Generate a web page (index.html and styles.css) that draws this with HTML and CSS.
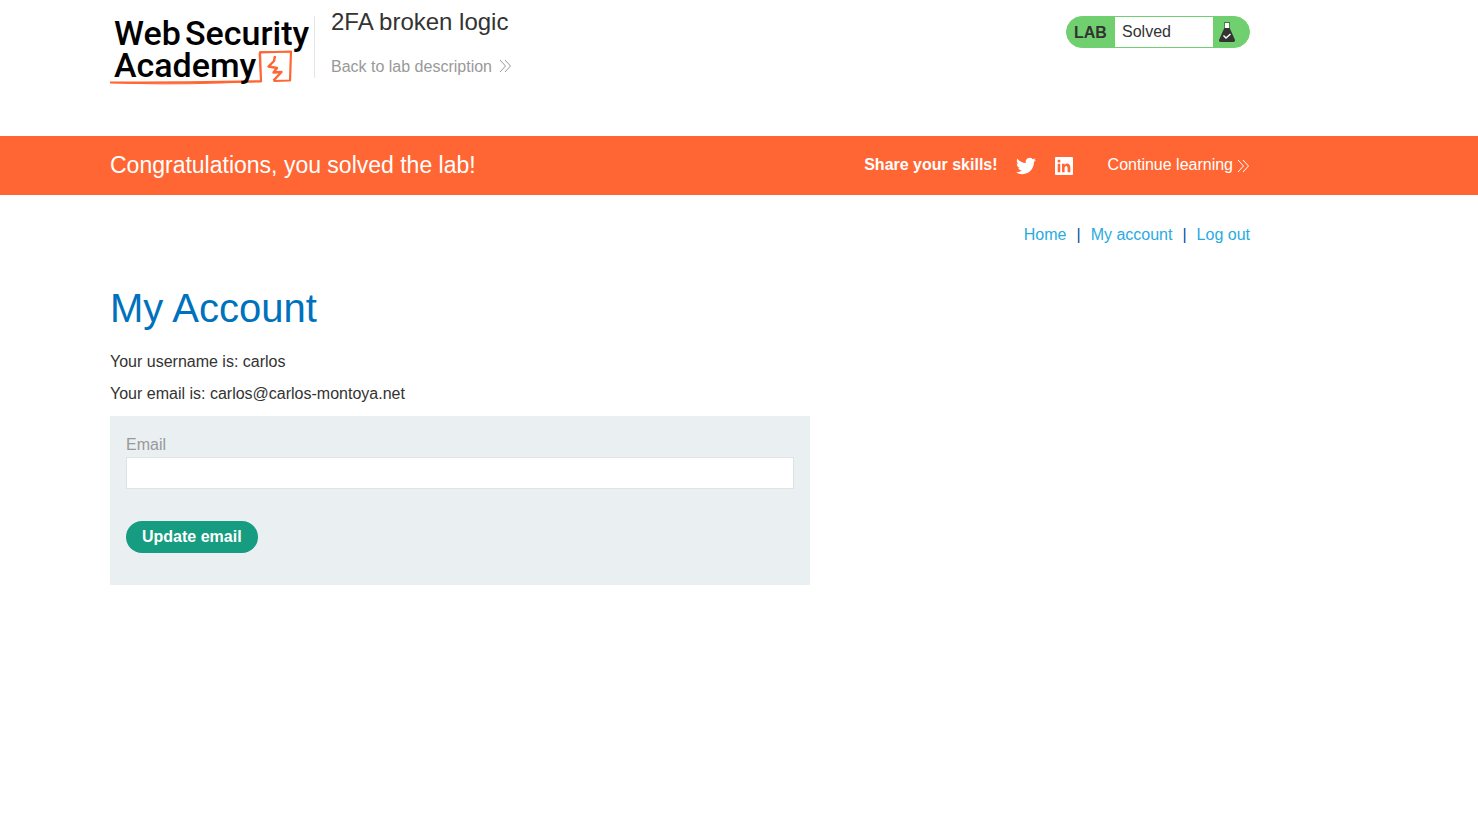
FILE: index.html
```html
<!DOCTYPE html>
<html lang="en">
<head>
<meta charset="utf-8">
<title>2FA broken logic</title>
<link rel="stylesheet" href="styles.css">
</head>
<body>
<header class="lab-header container">
  <a class="logo" href="#" aria-label="Web Security Academy">
    <svg width="201" height="80" viewBox="0 0 201 80">
      <g class="logo-mark">
        <path d="M0 74.500 Q60 74.800 151 73.300 L150 44.500 L181 43.500 L180 72.500 L163.500 73" stroke-width="2.200"/>
        <path d="M1 74.500 Q50 77 110 75 L150 73.500"/>
        <path d="M149 45.500 L151 74 M149.500 43.500 L182 44"/>
        <path d="M165 48 L164 53 L158.500 58.500 L167 60 L163.500 64.500 L171.500 64 L163.500 72.500" stroke-width="2.400"/>
      </g>
      <g class="logo-text">
        <text x="4" y="37">Web</text>
        <text x="75" y="37">Security</text>
        <text x="4" y="69">Academy</text>
      </g>
    </svg>
  </a>
  <div class="title-block">
    <h2 class="lab-title">2FA broken logic</h2>
    <a class="back-link" href="#">Back to lab description
      <svg class="chevrons" width="13" height="14" viewBox="0 0 13 14"><path d="M1 1 L6.500 7 L1 13 M6 1 L11.500 7 L6 13"/></svg>
    </a>
  </div>
  <div class="lab-status">
    <span class="lab-tag">LAB</span>
    <span class="lab-state">Solved</span>
    <span class="lab-flask">
      <svg width="16" height="20" viewBox="0 0 16 20">
        <path d="M6 1 H10 V6 H6 Z" fill="#fff"/>
        <path d="M5 .5 H11" stroke="#333332" stroke-width="1" stroke-opacity=".6" fill="none"/>
        <path d="M5.500 1 V6 M10.500 1 V6" stroke="#333332" stroke-opacity=".5" fill="none"/>
        <path d="M5.300 6 H10.700 L15.800 17.500 Q16.500 20 14 20 H2 Q-.5 20 .2 17.500 Z" fill="#333332"/>
        <path d="M4.500 13.500 L7 16 L11.500 12" stroke="#fff" stroke-width="1.400" fill="none"/>
      </svg>
    </span>
  </div>
</header>

<section class="banner">
  <div class="banner-inner container">
    <h4 class="banner-title">Congratulations, you solved the lab!</h4>
    <div class="share">
      <span class="share-label">Share your skills!</span>
      <a class="share-icon" href="#" aria-label="Twitter">
        <svg width="20" height="20" viewBox="0 0 24 24"><path fill="#fff" d="M23.950 4.570a10 10 0 0 1-2.820.770 4.960 4.960 0 0 0 2.160-2.720c-.950.550-2 .950-3.130 1.180a4.920 4.920 0 0 0-8.380 4.480C7.690 8.100 4.070 6.130 1.640 3.160a4.820 4.820 0 0 0-.670 2.480c0 1.710.870 3.210 2.190 4.100a4.900 4.900 0 0 1-2.230-.620v.060a4.920 4.920 0 0 0 3.950 4.830 5 5 0 0 1-2.210.080 4.940 4.940 0 0 0 4.600 3.420A9.870 9.870 0 0 1 0 19.540a13.990 13.990 0 0 0 7.550 2.210c9.050 0 14-7.500 14-13.980 0-.210 0-.420-.020-.630a9.940 9.940 0 0 0 2.460-2.550z"/></svg>
      </a>
      <a class="share-icon" href="#" aria-label="LinkedIn">
        <svg width="20" height="20" viewBox="0 0 20 20"><path fill="#fff" fill-rule="evenodd" d="M2 1 H18 Q19 1 19 2 V18 Q19 19 18 19 H2 Q1 19 1 18 V2 Q1 1 2 1 Z M3.700 7.700 V16.200 H6.300 V7.700 Z M5 3.500 A1.500 1.500 0 1 0 5 6.500 A1.500 1.500 0 1 0 5 3.500 Z M8 7.700 V16.200 H10.600 V12 C10.600 9.200 13.600 9.200 13.600 12 V16.200 H16.300 V11.500 C16.300 7.300 12.500 6.500 10.600 8.900 V7.700 Z"/></svg>
      </a>
    </div>
    <a class="continue-link" href="#">Continue learning
      <svg class="chevrons" width="13" height="14" viewBox="0 0 13 14"><path d="M1 1 L6.500 7 L1 13 M6 1 L11.500 7 L6 13"/></svg>
    </a>
  </div>
</section>

<main class="container">
  <nav class="account-nav">
    <a href="#">Home</a><span>|</span><a href="#">My account</a><span>|</span><a href="#">Log out</a>
  </nav>
  <h1 class="page-title">My Account</h1>
  <p class="detail">Your username is: carlos</p>
  <p class="detail">Your email is: carlos@carlos-montoya.net</p>
  <form class="email-form">
    <label class="email-label" for="email">Email</label>
    <input class="email-input" id="email" type="email" name="email">
    <button class="submit" type="submit">Update email</button>
  </form>
</main>
</body>
</html>
```

FILE: styles.css
```css
* {
  box-sizing: border-box;
}

body {
  margin: 0;
  background: #fff;
  color: #333332;
  font: 16px/24px "Liberation Sans", Arial, sans-serif;
}

a {
  text-decoration: none;
}

svg {
  display: block;
  flex: none;
}

h1, h2, h4, p {
  margin: 0;
  font-weight: 400;
}

.container {
  max-width: 1360px;
  padding: 0 110px;
}

.lab-header {
  display: flex;
  align-items: flex-start;
  min-height: 136px;
}

.logo {
  padding-top: 8px;
}

.logo-text {
  font: 500 34px Roboto, sans-serif;
  fill: #000;
}

.logo-mark {
  fill: none;
  stroke: #ff6633;
  stroke-width: 1;
  stroke-linejoin: round;
}

.title-block {
  position: relative;
  margin-left: 3px;
  padding: 8px 0 0 17px;
}

.title-block::before {
  content: "";
  position: absolute;
  left: 0;
  top: 16px;
  width: 1px;
  height: 62px;
  background: #e5e5e5;
}

.lab-title {
  font-size: 24px;
  line-height: 28px;
}

.back-link {
  display: flex;
  align-items: center;
  gap: 7px;
  margin-top: 19px;
  color: #999;
}

.chevrons {
  fill: none;
  stroke: currentColor;
  stroke-width: 1;
}

.back-link .chevrons {
  margin-bottom: 2px;
}

.lab-status {
  display: flex;
  width: 184px;
  height: 32px;
  margin: 16px 0 0 auto;
  border: 1px solid #70d070;
  border-radius: 16px;
  background: #70d070;
  line-height: 30px;
  overflow: hidden;
}

.lab-tag {
  width: 48px;
  padding-left: 7px;
  font-weight: 700;
  line-height: 32px;
}

.lab-state {
  flex: 1;
  padding-left: 7px;
  background: #fff;
}

.lab-flask {
  width: 36px;
  padding: 5px 0 0 6px;
}

.banner {
  background: #ff6633;
  color: #fff;
}

.banner-inner {
  display: flex;
  align-items: center;
  min-height: 59px;
  padding-bottom: 2px;
}

.banner-title {
  font-size: 23px;
}

.share {
  display: flex;
  align-items: center;
  gap: 18px;
  margin-left: auto;
}

.share-label {
  font-weight: 700;
}

.share-icon {
  padding-top: 2px;
}

.continue-link {
  display: flex;
  align-items: center;
  gap: 4px;
  margin-left: 34px;
  color: #fff;
}

.continue-link .chevrons {
  margin-top: 3px;
}

.account-nav {
  display: flex;
  justify-content: flex-end;
  gap: 10px;
  padding-top: 28px;
  color: #0b4f9e;
}

.account-nav a {
  color: #29abe2;
}

.page-title {
  margin-top: 37px;
  color: #0071bc;
  font-size: 40px;
  line-height: 48px;
}

.detail {
  margin-bottom: 8px;
}

.page-title + .detail {
  margin-top: 18px;
}

.email-form {
  max-width: 700px;
  margin-top: 10px;
  padding: 17px 16px 32px;
  background: #eaeff2;
}

.email-label {
  display: block;
  color: #999;
}

.email-input {
  display: block;
  width: 100%;
  height: 32px;
  padding: 4px 8px;
  border: 1px solid #e0e3e5;
  background: #fff;
  font: inherit;
}

.submit {
  display: block;
  height: 32px;
  margin-top: 32px;
  padding: 0 16px;
  border: 0;
  border-radius: 16px;
  background: #169c80;
  color: #fff;
  font: 700 16px/32px "Liberation Sans", Arial, sans-serif;
}
```
